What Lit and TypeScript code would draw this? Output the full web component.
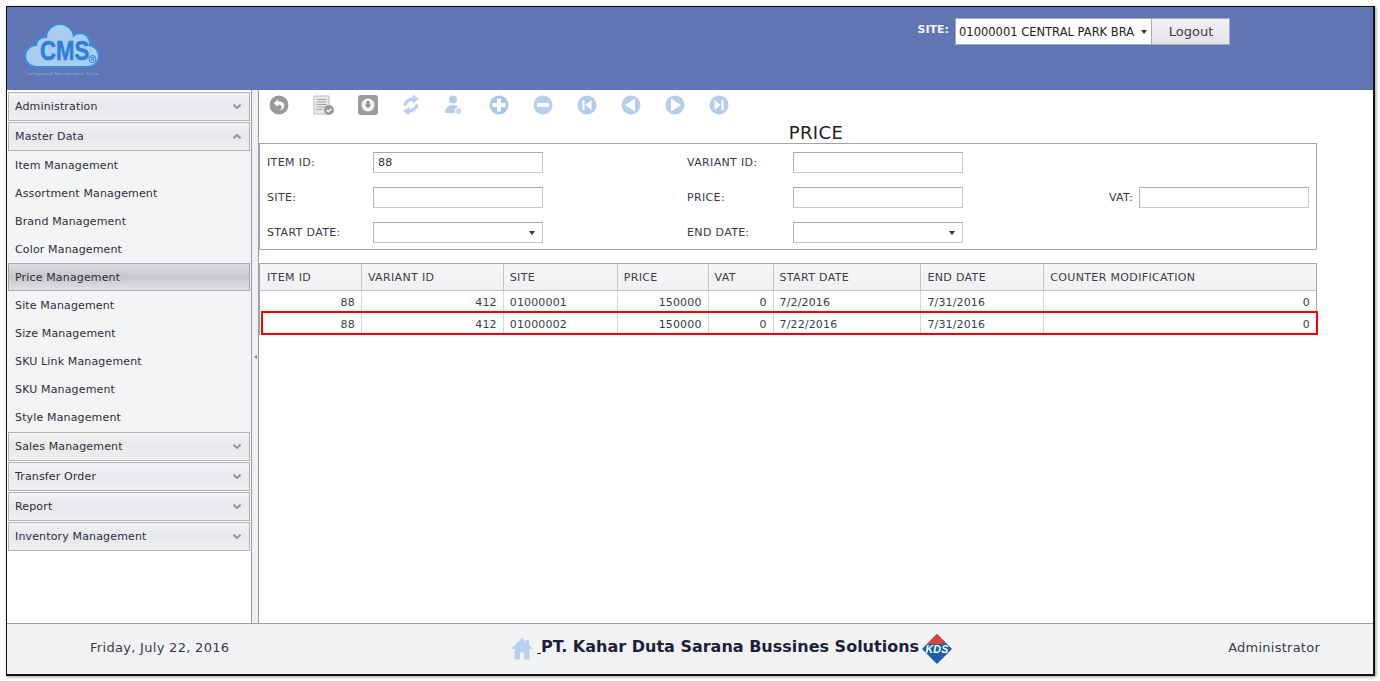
import { LitElement, html, css, svg } from "lit";
import { customElement } from "lit/decorators.js";

const chevron = (up: boolean) => html`<svg class="chev" width="10" height="7" viewBox="0 0 10 7"><path d=${up ? "M1.5 5.2 5 2 8.5 5.2" : "M1.5 1.8 5 5 8.5 1.8"} fill="none" stroke="#8f939b" stroke-width="2"/></svg>`;

const B = "#b4cdea";
const circ = (c: string, inner: unknown) => svg`<svg class="ic" width="20" height="20" viewBox="0 0 20 20"><circle cx="10" cy="10" r="9.5" fill=${c}/>${inner}</svg>`;
const icons = [
  { w: 44, i: circ("#9a9a9a", svg`<path d="M9 4.500 5 8.200 9 12V9.400c2.400 0 3.600 1 3.600 2.600 0 1.500-.8 2.800-2 3.500 3-.4 4.600-2.500 4.600-4.900 0-2.800-2.300-4.100-6.200-4.100z" fill="#fff"/>`) },
  { w: 45, i: svg`<svg class="ic" width="22" height="21" viewBox="0 0 22 21"><rect x="1" y="1" width="15" height="18" fill="#e8e8e8" stroke="#bdbdbd"/><path d="M3.500 4.500h10M3.500 7h10M3.500 9.500h10M3.500 12h8M3.500 14.500h6" stroke="#a5a5a5"/><circle cx="16" cy="15" r="5" fill="#999"/><path d="m13.600 15 1.800 1.800 3-3" fill="none" stroke="#fff" stroke-width="1.400"/></svg>` },
  { w: 43, i: svg`<svg class="ic" width="20" height="20" viewBox="0 0 20 20"><rect width="20" height="20" rx="3" fill="#9c9c9c"/><circle cx="10" cy="10" r="6.500" fill="#f2f2f2"/><path d="M8.600 6h2.800v3.600h1.900L10 13.400 6.700 9.600h1.900z" fill="#8c8c8c"/></svg>` },
  { w: 44, i: svg`<svg class="ic shift" width="16" height="20" viewBox="0 0 16 20"><path d="M10 0 15.500 4 10 8V5.800C7 5.800 4.500 7 3 11L.7 9.500C2 5 5.500 2.800 10 2.500z M6 20 .5 16 6 12v2.200c3 0 5.500-1.200 7-5.200l2.300 1.500C14 15 10.500 17.200 6 17.500z" fill="#b9d0ec" stroke="#b9d0ec" stroke-width=".6"/></svg>` },
  { w: 44, i: svg`<svg class="ic" width="18" height="20" viewBox="0 0 18 20"><circle cx="8" cy="4.500" r="4" fill=${B}/><path d="M0 18c0-5 3.500-8 8-8 2.500 0 4.500 1 6 2.500A4 4 0 0 0 10.500 18z" fill=${B}/><circle cx="13.500" cy="16" r="3.500" fill="#c9dbf0" stroke="#fff"/></svg>` },
  { w: 44, i: circ("#a9c5e8", svg`<path d="M8 3.500h4V8h4.500v4H12v4.500H8V12H3.500V8H8z" fill="#fff"/>`) },
  { w: 44, i: circ("#b7cfeb", svg`<rect x="4" y="8" width="12" height="4" fill="#fff"/>`) },
  { w: 44, i: circ(B, svg`<rect x="5.500" y="5" width="2" height="10" fill="#fff"/><path d="M14.500 5v10L8.500 10z" fill="#fff"/>`) },
  { w: 44, i: circ(B, svg`<path d="M14 3.500v13L4 10z" fill="#fff"/>`) },
  { w: 44, i: circ(B, svg`<path d="M6 3.500v13L16 10z" fill="#fff"/>`) },
  { w: 20, i: circ(B, svg`<rect x="12.500" y="5" width="2" height="10" fill="#fff"/><path d="M5.500 5v10l6-5z" fill="#fff"/>`) },
];

const items = ["Item Management","Assortment Management","Brand Management","Color Management","Price Management","Site Management","Size Management","SKU Link Management","SKU Management","Style Management"];
const cols = [
  ["ITEM ID",102],["VARIANT ID",142],["SITE",114],["PRICE",91],["VAT",65],["START DATE",148],["END DATE",123],["COUNTER MODIFICATION",272],
] as [string, number][];
const rows = [
  ["88","412","01000001","150000","0","7/2/2016","7/31/2016","0"],
  ["88","412","01000002","150000","0","7/22/2016","7/31/2016","0"],
];
const rightCols = new Set([0,1,3,4,7]);

@customElement("app-root")
export class AppRoot extends LitElement {
  static styles = css`
    :host { display: block; height: 681px; background: #fff; font-family: "DejaVu Sans", Verdana, sans-serif; font-size: 11px; color: #2e2e3a; overflow: hidden; }
    * { box-sizing: border-box; }
    .shell { margin: 6px 5px 5px 6px; height: 670px; border: 1px solid #111; border-right-width: 2px; border-bottom-width: 2px; display: flex; flex-direction: column; box-shadow: 1px 1px 3px #999; }
    .top { height: 83px; background: #6076b4; display: flex; justify-content: space-between; flex: none; }
    .logo { margin: 15px 0 0 16px; width: 78px; height: 60px; }
    .site { display: flex; align-items: flex-start; margin: 11px 143px 0 0; }
    .site label { color: #f2f4fa; font-weight: bold; font-size: 11px; margin: 5px 6px 0 0; }
    .sel { width: 197px; height: 27px; background: #fff; border: 1px solid #a5abb8; color: #222; display: flex; align-items: center; padding-left: 3px; font-size: 11.500px; position: relative; white-space: nowrap; }
    .arrow { width: 0; height: 0; border: 3.500px solid transparent; border-top: 4px solid #333; border-bottom: 0; }
    .sel .arrow { position: absolute; right: 4px; top: 11px; }
    .logout { width: 78px; height: 27px; border: 1px solid #a5abb8; border-left: 0; background: linear-gradient(#f1f2f4, #e3e4e9); color: #3a3a4a; font-size: 13px; display: flex; align-items: center; justify-content: center; padding-left: 1px; }
    .mid { flex: 1; display: flex; min-height: 0; }
    .side { width: 244px; flex: none; padding-top: 2px; display: flex; flex-direction: column; }
    .hd { height: 29px; margin: 0 0 1px 1px; width: 242px; flex: none; border: 1px solid #b4b4b4; background: linear-gradient(#f3f3f5 0, #e8e9ed 45%, #eeeff1 100%); display: flex; justify-content: space-between; align-items: center; padding: 0 7px 0 6px; letter-spacing: .15px; }
    .hd.open { margin-bottom: 0; }
    .list { background: #f3f4f6; height: 281px; flex: none; }
    .it { height: 28px; display: flex; align-items: center; padding: 0 8px; letter-spacing: .15px; }
    .it.act { background: linear-gradient(#dcdce0, #c6c7cc 50%, #e0e0e4); border: 1px solid #a8a9b2; margin-left: 1px; width: 242px; padding-left: 6px; }
    .split { width: 8px; flex: none; background: #eef0f4; border-left: 1px solid #9a9ca5; border-right: 1px solid #9a9ca5; display: flex; align-items: center; justify-content: center; }
    .split i { border: 2px solid transparent; border-right: 3px solid #888; border-left: 0; display: block; }
    .main { flex: 1; min-width: 0; padding-top: 4px; }
    .bar { display: flex; height: 22px; padding-left: 10px; align-items: center; }
    .bar div { display: flex; align-items: center; }
    .shift { margin-left: 2px; }
    .title { text-align: center; font-size: 18px; letter-spacing: .4px; color: #222; line-height: 20px; margin-top: 7px; height: 20px; }
    .form { width: 1058px; height: 107px; border: 1px solid #a3a3b0; display: grid; grid-template-columns: 106px 170px 144px 106px 170px 176px 170px; grid-auto-rows: 35px; padding: 1px 0 0 7px; align-items: center; letter-spacing: .35px; }
    .form label { color: #3a3a46; }
    .form label.r { text-align: right; padding-right: 6px; }
    .inp { height: 21px; width: 170px; margin-top: -1px; border: 1px solid #c6c8d2; border-top-color: #a8a9b6; border-left-color: #b4b5c0; padding: 1px 7px 0 4px; display: flex; align-items: center; justify-content: space-between; color: #2e2e3a; }
    .grid { width: 1058px; margin-top: 13px; border: 1px solid #a8a8b4; border-bottom: 0; position: relative; }
    .row { display: flex; height: 22px; }
    .row.h { height: 27px; background: linear-gradient(#f6f6f7, #f0f1f3); border-bottom: 1px solid #c2c3cb; }
    .c { border-right: 1px solid #d6d7dc; padding: 0 6px; display: flex; align-items: center; white-space: nowrap; color: #3c3c4a; letter-spacing: .15px; }
    .c:first-child { padding-left: 7px; }
    .row.h .c { border-right-color: #c6c7cd; letter-spacing: .35px; }
    .c:last-child { border-right: 0; }
    .c.right { justify-content: flex-end; }
    .mark { position: absolute; left: 1px; right: -2px; top: 47px; height: 24px; border: 2px solid #f00; pointer-events: none; }
    .foot { height: 51px; flex: none; background: #f1f2f4; border-top: 1px solid #a0a0a0; display: grid; grid-template-columns: 503px auto 1fr; align-items: center; font-size: 13px; letter-spacing: .3px; color: #3a3a46; }
    .date { padding: 0 0 4px 83px; }
    .user { text-align: right; padding: 0 53px 4px 0; letter-spacing: .25px; }
    .center { display: flex; align-items: center; }
    .co { font-weight: bold; font-size: 16px; letter-spacing: 0; color: #1f1f3a; margin: 0 3px 5px 0; }
    .u { display: block; width: 4px; height: 1px; background: #1f1f6a; margin: 9px 0 0 3px; }
  `;
  render() {
    const hd = (t: string, open = false) => html`<div class="hd ${open ? "open" : ""}"><span>${t}</span>${chevron(open)}</div>`;
    const blob = (d: number) => svg`<circle cx="13" cy="34" r=${10 + d}/><circle cx="22" cy="24" r=${8 + d}/><circle cx="37" cy="16" r=${13 + d}/><circle cx="57" cy="21" r=${9 + d}/><circle cx="65" cy="34" r=${10 + d}/><rect x="13" y=${24 - d} width="52" height=${20 + 2 * d}/>`;
    return html`<div class="shell">
      <div class="top">
        <svg class="logo" viewBox="0 0 78 60">
          <g fill="#3b8ad8">${blob(2)}</g>
          <g fill="#a9cdee">${blob(0)}</g>
          <text transform="translate(17 38) scale(.82 1)" font-family="Liberation Sans" font-weight="bold" font-size="27" fill="#2f7fd8" stroke="#2f7fd8" stroke-width=".6">CMS</text>
          <circle cx="69.500" cy="37" r="3.500" fill="#a9cdee" stroke="#2f7fd8"/>
          <text x="69.500" y="39" text-anchor="middle" font-family="Liberation Sans" font-weight="bold" font-size="5" fill="#2f7fd8">R</text>
          <text x="5" y="53" font-family="Liberation Sans" font-size="4" fill="#8fb4ea" textLength="70">Integrated Management Suite</text>
        </svg>
        <div class="site"><label>SITE:</label><div class="sel"><span>01000001 CENTRAL PARK BRA</span><i class="arrow"></i></div><div class="logout">Logout</div></div>
      </div>
      <div class="mid">
        <div class="side">
          ${hd("Administration")}${hd("Master Data", true)}
          <div class="list">${items.map((t) => html`<div class="it ${t === "Price Management" ? "act" : ""}">${t}</div>`)}</div>
          ${hd("Sales Management")}${hd("Transfer Order")}${hd("Report")}${hd("Inventory Management")}
        </div>
        <div class="split"><i></i></div>
        <div class="main">
          <div class="bar">${icons.map((x) => html`<div style="width:${x.w}px">${x.i}</div>`)}</div>
          <div class="title">PRICE</div>
          <div class="form">
            <label>ITEM ID:</label><div class="inp">88</div><span></span><label>VARIANT ID:</label><div class="inp"></div><span></span><span></span>
            <label>SITE:</label><div class="inp"></div><span></span><label>PRICE:</label><div class="inp"></div><label class="r">VAT:</label><div class="inp"></div>
            <label>START DATE:</label><div class="inp"><span></span><i class="arrow"></i></div><span></span><label>END DATE:</label><div class="inp"><span></span><i class="arrow"></i></div>
          </div>
          <div class="grid">
            <div class="row h">${cols.map(([t, w]) => html`<div class="c" style="width:${w}px">${t}</div>`)}</div>
            ${rows.map((r) => html`<div class="row">${r.map((v, i) => html`<div class="c ${rightCols.has(i) ? "right" : ""}" style="width:${cols[i][1]}px">${v}</div>`)}</div>`)}
            <div class="mark"></div>
          </div>
        </div>
      </div>
      <div class="foot">
        <div class="date">Friday, July 22, 2016</div>
        <div class="center">
          <svg width="24" height="24" viewBox="0 0 24 24"><path d="M12 1 1 12h3.500v10.500h5.500V15.500h4v7h5.500V12H23l-4-4V3h-3v2z" fill="#b8d0ee"/></svg>
          <span class="u"></span><span class="co">PT. Kahar Duta Sarana Bussines Solutions</span>
          <svg width="30" height="30" viewBox="0 0 30 30"><path d="M15 0 30 15 15 30 0 15z" fill="#1a5fa8"/><path d="M15 0 5 10h15l3-2z" fill="#d8453f"/><text x="15" y="19" text-anchor="middle" font-family="Liberation Sans" font-weight="bold" font-style="italic" font-size="10.500" fill="#fff">KDS</text></svg>
        </div>
        <div class="user">Administrator</div>
      </div>
    </div>`;
  }
}
